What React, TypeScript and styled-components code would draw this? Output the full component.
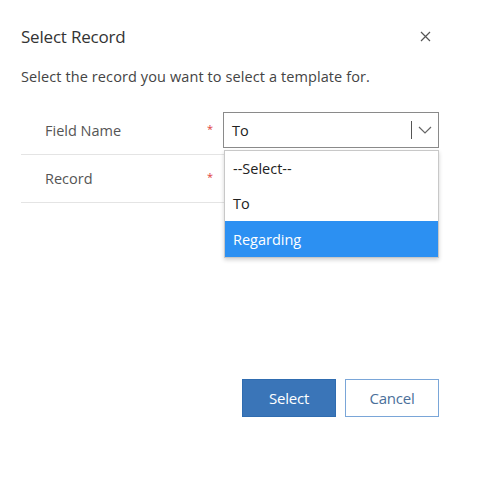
import React from "react";
import styled, { createGlobalStyle } from "styled-components";

const Global = createGlobalStyle`
  html, body { margin: 0; padding: 0; background: #fff; }
  body { font-family: "Open Sans", "Noto Sans", sans-serif; }
`;

const Dialog = styled.div`
  width: 500px;
  height: 479px;
  box-sizing: border-box;
  padding: 24px 61px 0 21px;
  display: flex;
  flex-direction: column;
`;

const Header = styled.div`
  display: flex;
  justify-content: space-between;
  align-items: center;
  height: 24px;
`;

const Title = styled.h1`
  margin: 0;
  font-size: 17px;
  font-weight: 400;
  color: #333;
  letter-spacing: -0.2px;
`;

const Close = styled.button`
  border: none;
  background: none;
  padding: 0;
  width: 12px;
  height: 12px;
  margin-right: 8px;
  display: flex;
  align-items: center;
  justify-content: center;
`;

const Subtitle = styled.p`
  margin: 19px 0 0;
  font-size: 14.5px;
  color: #444;
  letter-spacing: 0.1px;
`;

const Form = styled.div`
  margin-top: 20px;
  display: flex;
  flex-direction: column;
  position: relative;
`;

const Row = styled.div<{ $h: number }>`
  height: ${(p) => p.$h}px;
  display: flex;
  align-items: center;
  border-bottom: 1px solid #e4e4e4;
  position: relative;
`;

const Label = styled.div`
  width: 186px;
  box-sizing: border-box;
  padding-left: 24px;
  font-size: 14.5px;
  color: #555;
`;

const Asterisk = styled.span`
  width: 16px;
  color: #e0403a;
  font-size: 11px;
  margin-top: -4px;
`;

const Field = styled.div`
  width: 216px;
  height: 36px;
  box-sizing: border-box;
  border: 1px solid #8a8a8a;
  display: flex;
  align-items: center;
  padding-left: 8px;
  font-size: 14.5px;
  color: #222;
`;

const FieldText = styled.span`
  flex: 1;
`;

const Caret = styled.div`
  width: 1px;
  height: 18px;
  background: #555;
  margin-right: 6px;
`;

const Chevron = styled.div`
  width: 20px;
  display: flex;
  align-items: center;
  justify-content: flex-start;
`;

const Menu = styled.ul`
  list-style: none;
  margin: 0;
  padding: 0;
  position: absolute;
  left: 203px;
  top: 44px;
  width: 213px;
  background: #fff;
  border: 1px solid #c8c8c8;
  box-shadow: 0 2px 4px rgba(0, 0, 0, 0.18);
  z-index: 2;
`;

const Option = styled.li<{ $active?: boolean }>`
  height: ${(p) => (p.$active ? 36 : 35)}px;
  display: flex;
  align-items: center;
  padding-left: 8px;
  font-size: 14.5px;
  color: ${(p) => (p.$active ? "#fff" : "#222")};
  background: ${(p) => (p.$active ? "#2c90f2" : "#fff")};
`;

const Footer = styled.div`
  margin-top: auto;
  margin-bottom: 62px;
  display: flex;
  justify-content: flex-end;
  gap: 9px;
`;

const Button = styled.button<{ $primary?: boolean }>`
  width: 94px;
  height: 38px;
  font-family: "Open Sans", "Noto Sans", sans-serif;
  font-size: 15px;
  box-sizing: border-box;
  border: 1px solid ${(p) => (p.$primary ? "#2f6cb0" : "#7aa6d8")};
  background: ${(p) => (p.$primary ? "#3a75b8" : "#fff")};
  color: ${(p) => (p.$primary ? "#fff" : "#4a6f9a")};
  letter-spacing: -0.2px;
`;

export default function App() {
  return (
    <>
      <Global />
      <Dialog>
        <Header>
          <Title>Select Record</Title>
          <Close aria-label="Close">
            <svg width="11" height="11" viewBox="0 0 11 11">
              <path d="M1 1L10 10M10 1L1 10" stroke="#555" strokeWidth="1.2" />
            </svg>
          </Close>
        </Header>
        <Subtitle>Select the record you want to select a template for.</Subtitle>
        <Form>
          <Row $h={48}>
            <Label>Field Name</Label>
            <Asterisk>*</Asterisk>
            <Field>
              <FieldText>To</FieldText>
              <Caret />
              <Chevron>
                <svg width="14" height="8" viewBox="0 0 14 8">
                  <path d="M1 1L7 7L13 1" stroke="#666" strokeWidth="1.2" fill="none" />
                </svg>
              </Chevron>
            </Field>
            <Menu>
              <Option>--Select--</Option>
              <Option>To</Option>
              <Option $active>Regarding</Option>
            </Menu>
          </Row>
          <Row $h={47}>
            <Label>Record</Label>
            <Asterisk>*</Asterisk>
          </Row>
        </Form>
        <Footer>
          <Button $primary>Select</Button>
          <Button>Cancel</Button>
        </Footer>
      </Dialog>
    </>
  );
}
